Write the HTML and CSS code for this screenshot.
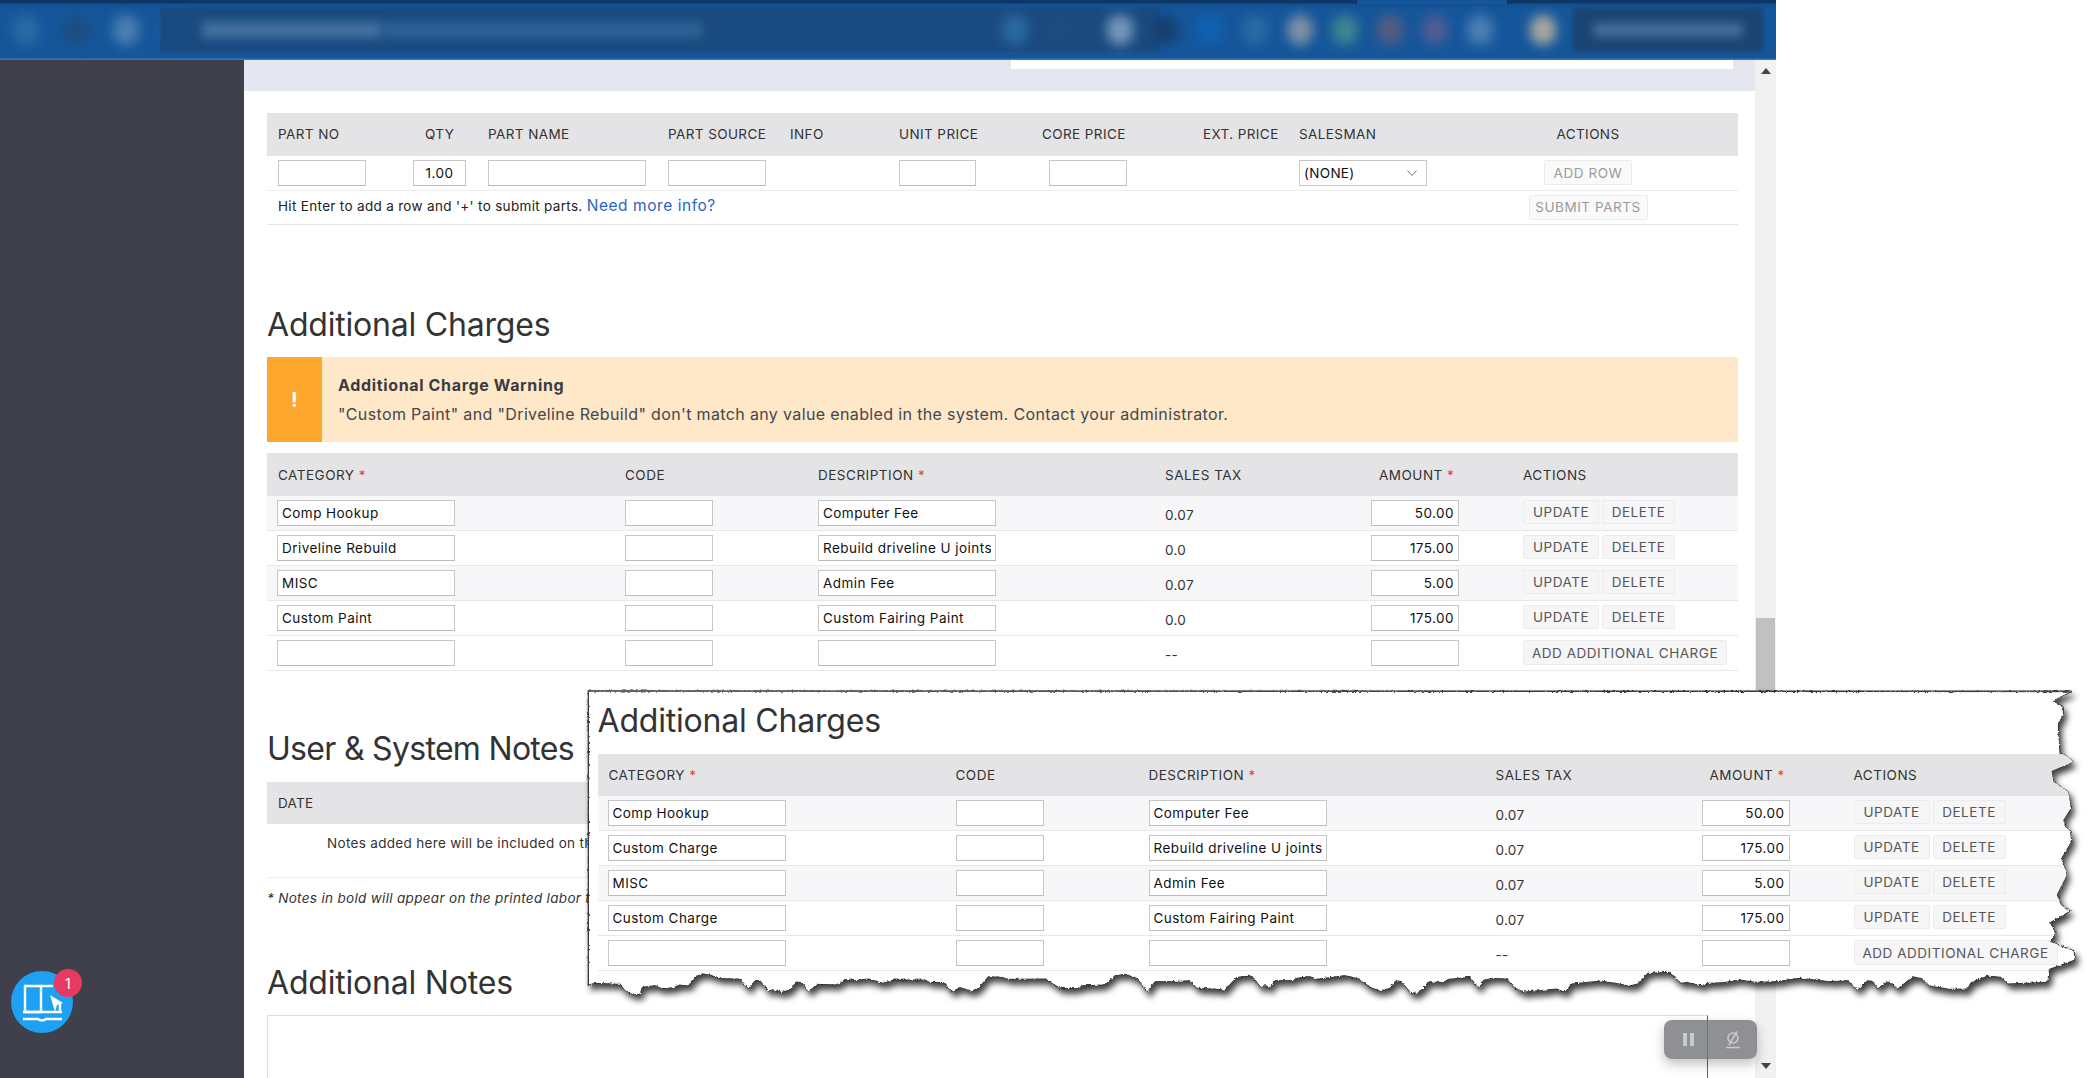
FILE: index.html
```html
<!DOCTYPE html>
<html>
<head>
    <title>Repair Order - Additional Charges</title>
    <link rel="stylesheet" href="styles.css">
</head>
<body>
<div class="window">
    <div class="topbar">
        <div class="top-notch"></div>
        <div class="top-icons">
            <span class="smudge s-dim"></span>
            <span class="smudge s-dark"></span>
            <span class="smudge s-soft"></span>
            <span class="smudge s-dim"></span>
        </div>
        <div class="url-bar">
            <span class="url-text"></span>
            <span class="url-text url-text-dim"></span>
            <span class="smudge s-dim url-icon"></span>
            <span class="smudge s-dark url-icon"></span>
        </div>
        <div class="top-tools">
            <span class="smudge s-pale"></span>
            <span class="smudge s-navy"></span>
            <span class="smudge s-blue"></span>
            <span class="smudge s-dim"></span>
            <span class="smudge s-grey"></span>
            <span class="smudge s-green"></span>
            <span class="smudge s-red"></span>
            <span class="smudge s-purple"></span>
            <span class="smudge s-soft"></span>
            <span class="smudge s-tan avatar"></span>
        </div>
        <div class="user-pill"><span class="user-text"></span></div>
    </div>

    <div class="main">
        <div class="sidebar"></div>

        <div class="content">
            <div class="band"><div class="band-strip"></div></div>

            <div class="inner">
                <div class="parts-row parts-head">
                    <div>PART NO</div>
                    <div class="qty-head">QTY</div>
                    <div>PART NAME</div>
                    <div>PART SOURCE</div>
                    <div>INFO</div>
                    <div>UNIT PRICE</div>
                    <div>CORE PRICE</div>
                    <div>EXT. PRICE</div>
                    <div class="salesman-head">SALESMAN</div>
                    <div></div>
                    <div class="actions-head">ACTIONS</div>
                </div>
                <div class="parts-row parts-inputs">
                    <div><input class="w-88" type="text"></div>
                    <div><input class="w-53 align-center" type="text" value="1.00"></div>
                    <div><input class="w-158" type="text"></div>
                    <div><input class="w-98" type="text"></div>
                    <div></div>
                    <div><input class="w-77" type="text"></div>
                    <div class="core-cell"><input class="w-78" type="text"></div>
                    <div></div>
                    <div class="salesman-cell">
                        <div class="fake-select">(NONE)
                            <svg width="10" height="6" viewBox="0 0 10 6"><path d="M.5.5 5 5.5 9.5.5" fill="none" stroke="#777"/></svg>
                        </div>
                    </div>
                    <div></div>
                    <div class="actions-cell"><button class="btn btn-off">ADD ROW</button></div>
                </div>
                <div class="parts-foot">
                    <div class="hint">Hit Enter to add a row and '+' to submit parts. <a href="#">Need more info?</a></div>
                    <div class="foot-action"><button class="btn btn-off">SUBMIT PARTS</button></div>
                </div>

                <h2 class="charges-title">Additional Charges</h2>
                <div class="warning">
                    <div class="warning-icon">!</div>
                    <div class="warning-text">
                        <strong>Additional Charge Warning</strong>
                        <p>"Custom Paint" and "Driveline Rebuild" don't match any value enabled in the system. Contact your administrator.</p>
                    </div>
                </div>

                <div class="charge-row charge-head">
                    <div>CATEGORY <span class="req">*</span></div>
                    <div>CODE</div>
                    <div>DESCRIPTION <span class="req">*</span></div>
                    <div>SALES TAX</div>
                    <div class="amount-head">AMOUNT <span class="req">*</span></div>
                    <div>ACTIONS</div>
                </div>
                <div class="charge-row">
                    <input class="w-cat" type="text" value="Comp Hookup">
                    <input class="w-code" type="text">
                    <input class="w-cat" type="text" value="Computer Fee">
                    <div class="tax">0.07</div>
                    <input class="w-code align-right" type="text" value="50.00">
                    <div class="row-actions"><button class="btn btn-update">UPDATE</button><button class="btn btn-delete">DELETE</button></div>
                </div>
                <div class="charge-row">
                    <input class="w-cat" type="text" value="Driveline Rebuild">
                    <input class="w-code" type="text">
                    <input class="w-cat" type="text" value="Rebuild driveline U joints">
                    <div class="tax">0.0</div>
                    <input class="w-code align-right" type="text" value="175.00">
                    <div class="row-actions"><button class="btn btn-update">UPDATE</button><button class="btn btn-delete">DELETE</button></div>
                </div>
                <div class="charge-row">
                    <input class="w-cat" type="text" value="MISC">
                    <input class="w-code" type="text">
                    <input class="w-cat" type="text" value="Admin Fee">
                    <div class="tax">0.07</div>
                    <input class="w-code align-right" type="text" value="5.00">
                    <div class="row-actions"><button class="btn btn-update">UPDATE</button><button class="btn btn-delete">DELETE</button></div>
                </div>
                <div class="charge-row">
                    <input class="w-cat" type="text" value="Custom Paint">
                    <input class="w-code" type="text">
                    <input class="w-cat" type="text" value="Custom Fairing Paint">
                    <div class="tax">0.0</div>
                    <input class="w-code align-right" type="text" value="175.00">
                    <div class="row-actions"><button class="btn btn-update">UPDATE</button><button class="btn btn-delete">DELETE</button></div>
                </div>
                <div class="charge-row">
                    <input class="w-cat" type="text">
                    <input class="w-code" type="text">
                    <input class="w-cat" type="text">
                    <div class="tax">--</div>
                    <input class="w-code align-right" type="text">
                    <div class="row-actions"><button class="btn btn-add">ADD ADDITIONAL CHARGE</button></div>
                </div>

                <h2 class="notes-title">User &amp; System Notes</h2>
                <div class="notes-head">DATE</div>
                <div class="notes-empty">Notes added here will be included on the printed labor ticket.</div>
                <div class="notes-foot">* Notes in bold will appear on the printed labor ticket.</div>

                <h2 class="more-title">Additional Notes</h2>
                <div class="notes-box"></div>
            </div>
        </div>

        <div class="scrollbar">
            <span class="arrow-up"></span>
            <span class="thumb"></span>
            <span class="arrow-down"></span>
        </div>
    </div>
</div>

<!-- reader widget, bottom left -->
<div class="reader-widget">
    <svg width="62" height="62" viewBox="0 0 62 62">
        <circle cx="31" cy="31" r="31" fill="#1ea1f2"/>
        <g fill="none" stroke="#fff" stroke-width="2.4">
            <path d="M14 15H30V41H14Z"/>
            <path d="M30 15H42"/>
            <path d="M49 32V41"/>
            <path d="M12 41H51"/>
            <path d="M12 48H27Q31 51 35 48H51"/>
        </g>
        <path d="M39 24 52 32 46 34 44 41Z" fill="#fff"/>
    </svg>
    <span class="reader-badge">1</span>
</div>

<!-- recorder controls -->
<div class="recorder">
    <div class="rec-pause"><span></span><span></span></div>
    <svg width="18" height="18" viewBox="0 0 18 18" fill="none" stroke="#c9cacc" stroke-width="1.6">
        <circle cx="9" cy="7" r="5"/>
        <path d="M2 16.5H16M5 14 13 .5"/>
    </svg>
</div>

<!-- pasted crop with torn edge, lies over the page -->
<div class="callout">
    <svg class="torn" viewBox="1764 2073 4476 918" width="1492" height="306">
        <defs>
            <polygon id="torn-edge" points="1765,2073 1765,2955 1785,2950 1835,2952 1860,2953 1875,2972 1905,2984 1920,2983 1927,2962 1965,2957 1985,2966 2020,2963 2040,2955 2065,2958 2085,2930 2110,2922 2140,2927 2160,2936 2220,2937 2235,2955 2245,2967 2265,2942 2280,2942 2305,2972 2320,2970 2345,2977 2370,2970 2390,2946 2405,2948 2427,2975 2450,2953 2515,2955 2535,2938 2565,2942 2605,2937 2650,2950 2680,2940 2775,2940 2790,2948 2830,2947 2855,2976 2880,2963 2915,2973 2935,2965 2965,2930 3005,2932 3025,2938 3135,2937 3180,2965 3225,2966 3255,2957 3305,2955 3320,2950 3345,2927 3375,2923 3410,2935 3425,2952 3442,2975 3465,2945 3515,2945 3570,2942 3590,2965 3635,2967 3675,2970 3710,2932 3755,2928 3785,2965 3795,2953 3808,2967 3825,2942 3880,2942 3890,2935 3930,2930 3950,2938 4035,2927 4080,2938 4110,2962 4140,2973 4170,2965 4188,2942 4205,2945 4230,2977 4250,2980 4270,2968 4285,2945 4330,2948 4345,2938 4410,2932 4435,2965 4450,2942 4475,2935 4520,2937 4545,2965 4575,2976 4670,2967 4695,2977 4715,2952 4803,2943 4858,2952 4888,2958 4913,2952 4943,2920 5008,2917 5043,2950 5063,2947 5108,2958 5123,2950 5168,2948 5218,2940 5268,2947 5328,2945 5398,2935 5488,2945 5543,2942 5573,2970 5603,2942 5618,2945 5633,2967 5663,2942 5693,2967 5738,2930 5768,2937 5788,2958 5848,2968 5903,2967 5913,2948 5963,2928 6003,2932 6023,2952 6143,2947 6148,2908 6198,2890 6225,2880 6222,2852 6150,2825 6168,2800 6152,2767 6212,2733 6185,2715 6170,2685 6200,2625 6185,2575 6215,2525 6212,2495 6195,2480 6190,2460 6212,2425 6205,2375 6160,2345 6155,2313 6220,2285 6200,2267 6180,2260 6178,2225 6175,2175 6190,2140 6190,2120 6160,2103 6170,2097 6215,2075"/>
            <clipPath id="torn-clip">
                <use href="#torn-edge" transform="scale(.33333) translate(-1764 -2073)"/>
            </clipPath>
            <filter id="rough" x="-1%" y="-2%" width="102%" height="104%">
                <feTurbulence type="fractalNoise" baseFrequency=".12" numOctaves="2" seed="4"/>
                <feDisplacementMap in="SourceGraphic" scale="10" xChannelSelector="R" yChannelSelector="G"/>
            </filter>
        </defs>
        <use href="#torn-edge" fill="#fff" stroke="#333" stroke-width="3" filter="url(#rough)"/>
        <path d="M1765 2958V2073H6215" fill="none" stroke="#333" stroke-width="3"/>
    </svg>
    <div class="callout-body">
        <h2 class="callout-title">Additional Charges</h2>
        <div class="charge-row charge-head">
            <div>CATEGORY <span class="req">*</span></div>
            <div>CODE</div>
            <div>DESCRIPTION <span class="req">*</span></div>
            <div>SALES TAX</div>
            <div class="amount-head">AMOUNT <span class="req">*</span></div>
            <div>ACTIONS</div>
        </div>
        <div class="charge-row">
            <input class="w-cat" type="text" value="Comp Hookup">
            <input class="w-code" type="text">
            <input class="w-cat" type="text" value="Computer Fee">
            <div class="tax">0.07</div>
            <input class="w-code align-right" type="text" value="50.00">
            <div class="row-actions"><button class="btn btn-update">UPDATE</button><button class="btn btn-delete">DELETE</button></div>
        </div>
        <div class="charge-row">
            <input class="w-cat" type="text" value="Custom Charge">
            <input class="w-code" type="text">
            <input class="w-cat" type="text" value="Rebuild driveline U joints">
            <div class="tax">0.07</div>
            <input class="w-code align-right" type="text" value="175.00">
            <div class="row-actions"><button class="btn btn-update">UPDATE</button><button class="btn btn-delete">DELETE</button></div>
        </div>
        <div class="charge-row">
            <input class="w-cat" type="text" value="MISC">
            <input class="w-code" type="text">
            <input class="w-cat" type="text" value="Admin Fee">
            <div class="tax">0.07</div>
            <input class="w-code align-right" type="text" value="5.00">
            <div class="row-actions"><button class="btn btn-update">UPDATE</button><button class="btn btn-delete">DELETE</button></div>
        </div>
        <div class="charge-row">
            <input class="w-cat" type="text" value="Custom Charge">
            <input class="w-code" type="text">
            <input class="w-cat" type="text" value="Custom Fairing Paint">
            <div class="tax">0.07</div>
            <input class="w-code align-right" type="text" value="175.00">
            <div class="row-actions"><button class="btn btn-update">UPDATE</button><button class="btn btn-delete">DELETE</button></div>
        </div>
        <div class="charge-row">
            <input class="w-cat" type="text">
            <input class="w-code" type="text">
            <input class="w-cat" type="text">
            <div class="tax">--</div>
            <input class="w-code align-right" type="text">
            <div class="row-actions"><button class="btn btn-add">ADD ADDITIONAL CHARGE</button></div>
        </div>
    </div>
</div>
</body>
</html>
```

FILE: styles.css
```css
* { box-sizing: border-box; }
html, body { margin: 0; height: 100%; overflow: hidden; background: #fff; }
body { font-family: Inter, "Liberation Sans", sans-serif; font-size: 13.5px; color: #333; letter-spacing: .32px; }
h2 { margin: 0; font-size: 32px; font-weight: 400; line-height: 40px; color: #333; letter-spacing: -.2px; }
p { margin: 0; }

.window { width: 1776px; height: 1078px; display: flex; flex-direction: column; overflow: hidden; }

/* top bar, blurred in the source */
.topbar { position: relative; height: 60px; flex: none; display: flex; align-items: center; overflow: hidden;
    background: linear-gradient(#0c3768 0, #0c3768 3px, #13508f 4px, #15569b 10px, #15569b 58px, #3f74ad 59px, #3f74ad 60px); }
.top-notch { position: absolute; left: 1357px; top: 0; width: 150px; height: 4px; background: #15569b; }
.top-icons { width: 160px; flex: none; display: flex; gap: 24px; padding-left: 13px; }
.url-bar { width: 1000px; height: 44px; flex: none; display: flex; align-items: center; background: #1a4b80; filter: blur(1px); padding-left: 42px; }
.url-text { width: 180px; height: 16px; background: #44719f; filter: blur(5px); }
.url-text-dim { width: 320px; background: #2f6296; }
.url-icon { margin-left: 300px; }
.url-icon + .url-icon { margin-left: 18px; }
.top-tools { display: flex; gap: 19px; flex: none; margin-left: -53px; }
.smudge { width: 26px; height: 30px; border-radius: 13px; filter: blur(6px); flex: none; }
.s-pale { background: #7598bc; }
.s-soft { background: #4a7fb3; }
.s-dim { background: #2a6aa3; }
.s-dark { background: #1c4d80; }
.s-navy { background: #163f6e; }
.s-blue { background: #0f62b0; }
.s-grey { background: #7e90a4; }
.s-green { background: #3f8590; }
.s-red { background: #555d80; }
.s-purple { background: #515c92; }
.s-tan { background: #a8a7a0; }
.avatar { margin-left: 18px; }
.user-pill { width: 190px; height: 44px; margin-left: 17px; flex: none; display: flex; align-items: center; justify-content: center; background: #1a4473; filter: blur(2px); }
.user-text { width: 150px; height: 14px; background: #466f98; filter: blur(4px); }

.main { flex: 1; display: flex; min-height: 0; }
.sidebar { width: 244px; flex: none; background: #3f404c; }
.content { flex: 1; min-width: 0; overflow: hidden; background: #fff; }
.band { height: 31px; background: #e4e6f0; }
.band-strip { width: 722px; height: 9px; margin-left: 767px; background: #fff; }
.inner { padding: 22px 17px 0 23px; }

.scrollbar { width: 21px; flex: none; background: #f1f1f1; display: flex; flex-direction: column; align-items: center; }
.arrow-up { width: 0; height: 0; margin-top: 8px; border: 5px solid transparent; border-top: 0; border-bottom: 6px solid #444; }
.thumb { width: 19px; height: 360px; margin-top: 544px; background: #c1c1c1; }
.arrow-down { width: 0; height: 0; margin-top: auto; margin-bottom: 9px; border: 5px solid transparent; border-bottom: 0; border-top: 6px solid #444; }

/* inputs and buttons */
input { height: 26px; padding: 0 4px; border: 1px solid #c6c6c6; border-bottom-color: #bbb; background: #fff; font: inherit; color: #111; letter-spacing: .45px; display: block; }
.align-right { text-align: right; }
.align-center { text-align: center; }
.w-88 { width: 88px; }
.w-53 { width: 53px; }
.w-158 { width: 158px; }
.w-98 { width: 98px; }
.w-77 { width: 77px; }
.w-78 { width: 78px; }
.w-cat { width: 178px; }
.w-code { width: 88px; }

.btn { height: 24px; padding: 0; border: 1px solid #ececec; border-radius: 2px; background: #f6f6f7; font: inherit; letter-spacing: .55px; color: #55555a; }
.btn-off { color: #9a9a9a; background: #fafafa; }
.btn-update { width: 76px; }
.btn-delete { width: 73px; margin-left: 3px; }
.btn-add { width: 204px; height: 25px; }

/* parts table */
.parts-row { display: grid; grid-template-columns: 135px 75px 180px 122px 109px 143px 161px 96px 0 151px 1fr; padding: 0 12px 0 11px; }
.parts-head { height: 43px; padding-bottom: 2px; align-items: center; background: #e4e4e6; color: #333; letter-spacing: .4px; }
.qty-head { padding-left: 12px; }
.actions-head { text-align: center; }
.parts-inputs { height: 35px; padding-top: 4px; border-bottom: 1px solid #ececec; }
.core-cell { padding-left: 7px; }
.fake-select { width: 128px; height: 26px; padding: 0 9px 0 4px; border: 1px solid #c6c6c6; display: flex; align-items: center; justify-content: space-between; color: #111; }
.actions-cell, .foot-action { display: flex; justify-content: center; }
.actions-cell .btn { width: 88px; height: 25px; }
.parts-foot { height: 34px; padding-left: 11px; display: flex; align-items: center; justify-content: space-between; border-bottom: 1px solid #e6e6e6; }
.hint { color: #222; padding-bottom: 4px; }
.hint a { color: #2a63c9; font-size: 15.5px; letter-spacing: .55px; text-decoration: none; }
.foot-action { width: 276px; margin-right: 12px; padding-bottom: 1px; }
.foot-action .btn { width: 119px; height: 25px; }

/* charges */
.charges-title { margin: 80px 0 12px; }
.warning { height: 85px; display: flex; margin-bottom: 11px; background: #fee8c8; border-radius: 2px; }
.warning-icon { width: 55px; flex: none; display: flex; align-items: center; justify-content: center; background: #fda82d; color: #fff; font-size: 20px; font-weight: 700; }
.warning-text { padding: 18px 0 0 16px; font-size: 16px; letter-spacing: .36px; }
.warning-text strong { display: block; font-weight: 700; letter-spacing: .65px; color: #3a3a44; }
.warning-text p { margin-top: 9px; color: #45454f; }

.charge-row { display: grid; grid-template-columns: 348px 193px 347px 206px 152px 1fr; height: 35px; padding: 4px 0 0 10px; align-items: start; border-bottom: 1px solid #e8e8e8; }
.charge-head { height: 43px; padding: 0 0 0 11px; grid-template-columns: 347px 193px 347px 206px 152px 1fr; align-items: center; border: 0; background: #e4e4e6; color: #333; letter-spacing: .5px; }
.amount-head { padding-left: 8px; }
.req { color: #e8431f; }
.tax { padding-top: 7px; color: #333; }
.row-actions { display: flex; }

.charge-head + .charge-row,
.charge-head + .charge-row + .charge-row + .charge-row { background: #f7f7f9; }

/* notes */
.notes-title { margin: 58px 0 13px; letter-spacing: -.7px; }
.notes-head { height: 42px; padding-left: 11px; display: flex; align-items: center; background: #e4e4e6; }
.notes-empty { height: 54px; padding: 11px 0 0 60px; border-bottom: 1px solid #f0f0f0; color: #333; }
.notes-foot { margin-top: 12px; font-style: italic; color: #333; }
.more-title { margin: 57px 0 12px; }
.notes-box { width: 1441px; height: 200px; border: 1px solid #ddd; border-right-color: #666; }

/* floating things */
.reader-widget { position: absolute; left: 11px; top: 971px; width: 62px; height: 62px; }
.reader-widget svg { display: block; }
.reader-badge { position: absolute; left: 43px; top: -2px; width: 28px; height: 28px; border-radius: 50%; background: #e63a60; color: #fff; display: flex; align-items: center; justify-content: center; font-size: 14px; }
.recorder { position: absolute; left: 1664px; top: 1020px; width: 93px; height: 39px; border-radius: 8px; background: rgba(118,120,123,.82); box-shadow: 0 5px 12px rgba(0,0,0,.25); display: flex; align-items: center; gap: 30px; padding-left: 19px; }
.rec-pause { display: flex; gap: 3px; }
.rec-pause span { width: 4px; height: 13px; background: #c9cacc; }

.callout { position: absolute; left: 588px; top: 691px; width: 1492px; height: 306px; }
.torn { position: absolute; left: 0; top: 0; overflow: visible; filter: drop-shadow(3px 5px 3px rgba(0,0,0,.75)); }
.callout-body { position: absolute; left: 0; top: 0; width: 1492px; height: 306px; padding: 10px 0 0 9.5px; clip-path: url(#torn-clip); }
.callout-title { margin-bottom: 13px; }
.callout .charge-head { height: 42px; }
```
